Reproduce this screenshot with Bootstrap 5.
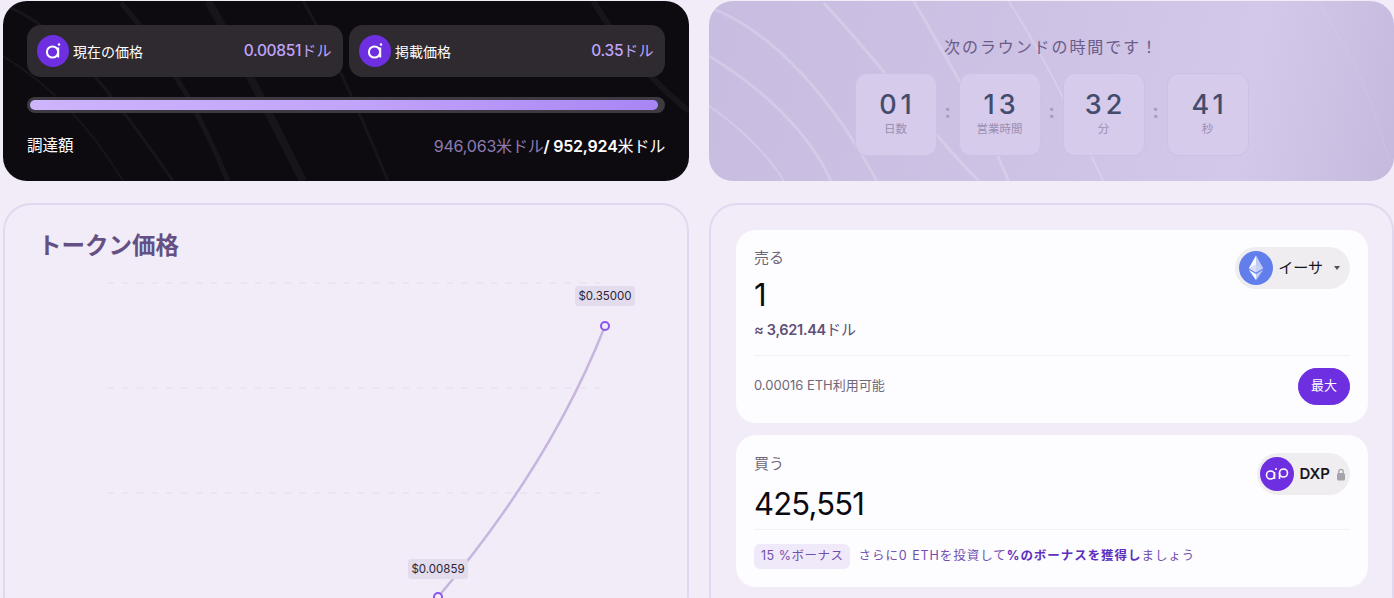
<!DOCTYPE html>
<html lang="ja">
<head>
  <meta charset="UTF-8" />
  <meta name="viewport" content="width=device-width, initial-scale=1" />
  <title>Presale</title>
  <link href="https://cdn.jsdelivr.net/npm/bootstrap@5.3.0/dist/css/bootstrap.min.css" rel="stylesheet" />
  <style>
    html, body { height: 598px; overflow: hidden; }
    body {
      background-color: #f2ecf8;
      font-family: Inter, "Noto Sans CJK JP", sans-serif;
    }
    .page-grid {
      display: grid;
      grid-template-columns: 686px 685px;
      grid-template-rows: 180px 420px;
      column-gap: 20px;
      row-gap: 22px;
      padding: 1px 0 0 3px;
    }
    .top-panel { position: relative; height: 180px; border-radius: 24px; overflow: hidden; }
    .top-panel > .panel-body { position: relative; height: 100%; }
    .waves { position: absolute; inset: 0; width: 100%; height: 100%; }
    .dark-panel { background: #0e0b10; padding: 24px 24px 0; color: #fff; }
    .light-panel { background: linear-gradient(100deg, #c8bce0 0%, #cdc1e4 45%, #d4c8ea 78%, #c5b9dd 100%); }

    .price-row { gap: 6px; }
    .price-box { height: 52px; flex: 1 1 0; background: #2e2a30; border-radius: 14px; padding: 0 11px 0 10px; font-size: 14px; }
    .logo-dot { width: 32px; height: 32px; flex: none; }
    .price-val { color: #c0a3f9; font-size: 15.5px; font-weight: 500; letter-spacing: -.3px; }
    .price-val span { font-weight: 400; font-size: 15px; letter-spacing: .4px; }
    .raise-bar { height: 16px; margin: 20px 0 21px; padding: 3px; background: #3d3a41; border-radius: 8px; }
    .raise-bar .progress-bar { background: linear-gradient(90deg, #cdb4fb, #c2a5fb 50%, #a985f4); border-radius: 5px; }
    .raise-line { font-size: 15.5px; }
    .raised-now { color: #8d7bb0; font-weight: 400; }
    .raised { font-size: 16px; font-weight: 600; letter-spacing: -.2px; }
    .raised .yen-word { font-weight: 400; }

    .count-title { padding-top: 36px; font-size: 16px; line-height: 20px; color: #6a5c88; letter-spacing: 1.9px; }
    .count-row { margin-top: 16px; }
    .count-box {
      width: 82px; height: 83px; border-radius: 12px;
      background: #d6cbeb; border: 1px solid #cdc1e3;
      color: #434c6c;
    }
    .count-num { font-size: 27px; font-weight: 500; letter-spacing: 4px; padding-left: 4px; line-height: 32px; margin-top: 15px; }
    .count-lab { font-size: 11.5px; line-height: 14px; color: #9a8fb3; margin-top: 1px; }
    .count-sep { width: 22px; font-size: 20px; font-weight: 700; color: #a79dbf; padding-bottom: 8px; }

    .chart-card, .swap-card { border: 2px solid #e0d8ee; border-radius: 28px; background: #f2ecf8; height: 420px; }
    .chart-title { font-size: 23.5px; font-weight: 700; color: #655084; line-height: 30px; margin: 26px 0 0 33px; }
    .chart-svg { display: block; margin-top: 4px; }
    .chart-svg text { font-family: Inter, sans-serif; font-size: 11.5px; fill: #2b2438; }

    .swap-card { padding: 25px 24px 0 25px; }
    .swap-item { background: #fdfcfe; border-radius: 20px; padding: 0 18px; position: relative; }
    .sell-item { height: 193px; margin-bottom: 12px; }
    .buy-item { height: 152px; }
    .swap-lab { font-size: 15px; color: #6e6878; line-height: 20px; }
    .swap-num { font-size: 31px; line-height: 38px; color: #0b0a10; letter-spacing: -.8px; }
    .swap-usd { font-size: 14.5px; color: #5e4f78; font-weight: 600; letter-spacing: -.3px; }
    .swap-usd span { font-weight: 400; font-size: 15px; letter-spacing: 0; }
    .swap-rule { border-top: 1px solid #f2eff5; }
    .token-pill { background: #f0edf1; border-radius: 21px; height: 42px; padding: 0 10px 0 4px; font-size: 15px; color: #17151c; margin-top: -1px; }
    .token-pill svg { flex: none; }
    .token-name { font-size: 15px; margin: 0 11px 0 5px; }
    .dxp-pill { padding: 0 4px 0 3px; }
    .dxp-name { font-size: 15px; font-weight: 600; margin: 0 6px 0 5px; }
    .tiny-caret { width: 0; height: 0; border-left: 3px solid transparent; border-right: 3px solid transparent; border-top: 4px solid #55505c; }
    .avail { font-size: 13px; color: #6e6878; }
    .btn-max { --bs-btn-bg: #6d2fe0; --bs-btn-color: #fff; --bs-btn-hover-bg: #5e27c4; --bs-btn-hover-color: #fff; --bs-btn-border-color: #6d2fe0; --bs-btn-padding-x: 0; --bs-btn-padding-y: 0; --bs-btn-font-size: 13px; width: 52px; height: 37px; border-radius: 19px; }
    .bonus-tag { background: #f0e9f9; color: #6f4fb0; border-radius: 6px; height: 25px; padding: 0 7px; font-size: 12.5px; letter-spacing: .5px; }
    .bonus-text { font-size: 12.5px; color: #6f4fb0; letter-spacing: .95px; }
    .bonus-text b { color: #5c2fc0; }
  </style>
</head>
<body>

<div class="page-grid">

  <!-- raised panel -->
  <div class="top-panel dark-panel">
    <svg class="waves" viewBox="0 0 686 180" fill="none" stroke="#fff" stroke-opacity=".045">
      <path d="M0 4C60 25 115 100 170 180" stroke-width="3"/>
      <path d="M0 55C50 85 90 130 120 180" stroke-width="2"/>
      <path d="M118 2C170 60 200 120 225 180" stroke-width="5"/>
      <path d="M205 0C240 60 270 120 300 180" stroke-width="8"/>
      <path d="M300 0C335 60 360 120 385 180" stroke-width="3"/>
      <path d="M590 0C620 50 660 90 686 110" stroke-width="6"/>
    </svg>
    <div class="panel-body">
      <div class="d-flex price-row">
        <div class="price-box d-flex align-items-center">
          <svg class="logo-dot me-1" viewBox="0 0 32 32"><circle cx="16" cy="16" r="16" fill="#6d2fe0"/><circle cx="15.5" cy="17" r="5.6" fill="none" stroke="#fff" stroke-width="2"/><circle cx="22" cy="9.5" r="1.2" fill="#fff"/><path d="M21.2 12.5V22.5" stroke="#fff" stroke-width="2"/></svg>
          <span>現在の価格</span>
          <span class="price-val ms-auto">0.00851<span>ドル</span></span>
        </div>
        <div class="price-box d-flex align-items-center">
          <svg class="logo-dot me-1" viewBox="0 0 32 32"><circle cx="16" cy="16" r="16" fill="#6d2fe0"/><circle cx="15.5" cy="17" r="5.6" fill="none" stroke="#fff" stroke-width="2"/><circle cx="22" cy="9.5" r="1.2" fill="#fff"/><path d="M21.2 12.5V22.5" stroke="#fff" stroke-width="2"/></svg>
          <span>掲載価格</span>
          <span class="price-val ms-auto">0.35<span>ドル</span></span>
        </div>
      </div>
      <div class="progress raise-bar">
        <div class="progress-bar" style="width: 99.3%"></div>
      </div>
      <div class="raise-line d-flex justify-content-between align-items-center">
        <span>調達額</span>
        <span class="raised"><span class="raised-now">946,063米ドル</span>/ 952,924<span class="yen-word">米ドル</span></span>
      </div>
    </div>
  </div>

  <!-- countdown panel -->
  <div class="top-panel light-panel">
    <svg class="waves" viewBox="0 0 686 180" fill="none" stroke="#fff" stroke-opacity=".2">
      <path d="M0 6C65 30 125 100 168 180" stroke-width="3"/>
      <path d="M0 55C50 85 100 130 122 180" stroke-width="3"/>
      <path d="M0 105C30 125 60 155 75 180" stroke-width="2"/>
      <path d="M115 2C170 60 220 130 270 180" stroke-width="3"/>
      <path d="M205 0C240 60 275 120 300 180" stroke-width="3"/>
      <path d="M300 0C345 70 370 130 395 180" stroke-width="2"/>
      <path d="M610 0C640 50 665 90 686 180" stroke-width="1" stroke-opacity=".12"/>
    </svg>
    <div class="panel-body text-center">
      <div class="count-title">次のラウンドの時間です！</div>
      <div class="count-row d-flex justify-content-center">
        <div class="count-box"><div class="count-num">01</div><div class="count-lab">日数</div></div>
        <div class="count-sep d-flex align-items-center justify-content-center">:</div>
        <div class="count-box"><div class="count-num">13</div><div class="count-lab">営業時間</div></div>
        <div class="count-sep d-flex align-items-center justify-content-center">:</div>
        <div class="count-box"><div class="count-num">32</div><div class="count-lab">分</div></div>
        <div class="count-sep d-flex align-items-center justify-content-center">:</div>
        <div class="count-box"><div class="count-num">41</div><div class="count-lab">秒</div></div>
      </div>
    </div>
  </div>

  <!-- price chart -->
  <div class="chart-card">
    <div class="chart-title">トークン価格</div>
    <svg class="chart-svg" width="682" height="340" viewBox="5 265 682 340" fill="none">
      <g stroke="#ebe5f2" stroke-width="2" stroke-dasharray="7 7.76">
        <path d="M107 283H601"/><path d="M107 388H601"/><path d="M107 493H601"/>
      </g>
      <path d="M438 597C495 530 560 440 605 326" stroke="#c6b6de" stroke-width="2.5"/>
      <circle cx="605" cy="326" r="4" fill="#f2ecf8" stroke="#8a56ee" stroke-width="2"/>
      <circle cx="438" cy="597" r="4" fill="#f2ecf8" stroke="#8a56ee" stroke-width="2"/>
      <rect x="575" y="286" width="60" height="20" rx="3" fill="#e3dcec"/>
      <text x="605" y="300" text-anchor="middle">$0.35000</text>
      <rect x="408" y="559" width="60" height="20" rx="3" fill="#e3dcec"/>
      <text x="438" y="573" text-anchor="middle">$0.00859</text>
    </svg>
  </div>

  <!-- swap form -->
  <div class="swap-card">
    <div class="swap-item sell-item">
      <div class="d-flex justify-content-between" style="padding-top:18px">
        <div>
          <div class="swap-lab">売る</div>
          <div class="swap-num" style="margin-top:8px">1</div>
          <div class="swap-usd" style="margin-top:5px">≈ 3,621.44<span>ドル</span></div>
        </div>
        <div class="token-pill d-flex align-items-center">
          <svg width="34" height="34" viewBox="0 0 34 34"><circle cx="17" cy="17" r="17" fill="#627eea"/><path d="M17 4.5 9.8 17.2 17 21.4V4.5Z" fill="#fff" fill-opacity=".95"/><path d="M17 4.5 24.2 17.2 17 21.4V4.5Z" fill="#fff" fill-opacity=".6"/><path d="M17 13.5 9.8 17.2 17 21.4 24.2 17.2Z" fill="#c9d3f7" fill-opacity=".7"/><path d="M9.8 18.7 17 29.3V23Z" fill="#fff" fill-opacity=".95"/><path d="M24.2 18.7 17 29.3V23Z" fill="#fff" fill-opacity=".6"/></svg>
          <span class="token-name">イーサ</span>
          <span class="tiny-caret"></span>
        </div>
      </div>
      <div class="swap-rule" style="margin-top:13px"></div>
      <div class="d-flex justify-content-between align-items-center" style="margin-top:12px">
        <span class="avail">0.00016 ETH利用可能</span>
        <button type="button" class="btn btn-max">最大</button>
      </div>
    </div>

    <div class="swap-item buy-item">
      <div class="d-flex justify-content-between" style="padding-top:19px">
        <div>
          <div class="swap-lab">買う</div>
          <div class="swap-num" style="margin-top:11px">425,551</div>
        </div>
        <div class="token-pill dxp-pill d-flex align-items-center">
          <svg width="34" height="34" viewBox="0 0 34 34"><circle cx="17" cy="17" r="17" fill="#6d2fe0"/><circle cx="10.5" cy="18" r="4" fill="none" stroke="#fff" stroke-width="1.6"/><path d="M14.5 15v7" stroke="#fff" stroke-width="1.6"/><circle cx="23.5" cy="16" r="4" fill="none" stroke="#fff" stroke-width="1.6"/><path d="M19.5 16v6" stroke="#fff" stroke-width="1.6"/><circle cx="16" cy="12" r="1" fill="#fff"/></svg>
          <span class="dxp-name">DXP</span>
          <svg width="10" height="13" viewBox="0 0 10 13"><rect x="1" y="5" width="8" height="7.5" rx="1.6" fill="#a6a3aa"/><path d="M2.8 5.5V3.6a2.2 2.2 0 0 1 4.4 0v1.9" fill="none" stroke="#a6a3aa" stroke-width="1.3"/></svg>
        </div>
      </div>
      <div class="swap-rule" style="margin-top:6px"></div>
      <div class="d-flex align-items-center" style="margin-top:14px">
        <span class="bonus-tag d-inline-flex align-items-center">15 %ボーナス</span>
        <span class="bonus-text ms-2">さらに0 ETHを投資して<b>%のボーナスを獲得し</b>ましょう</span>
      </div>
    </div>
  </div>

</div>

</body>
</html>
